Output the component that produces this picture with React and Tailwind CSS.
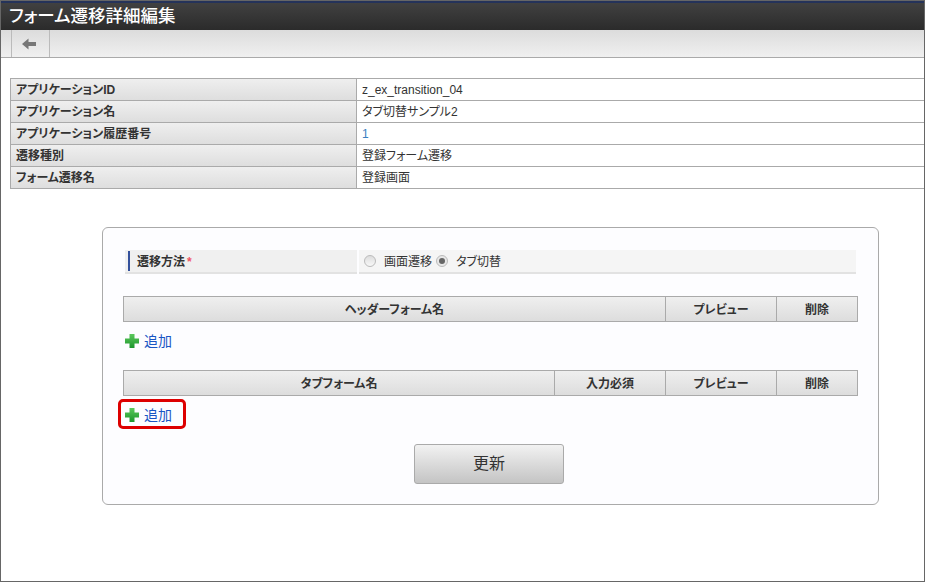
const font = { fontFamily: '"Liberation Sans", "Noto Sans CJK JP", sans-serif' }

const infoRows = [
  ['アプリケーションID', 'z_ex_transition_04'],
  ['アプリケーション名', 'タブ切替サンプル2'],
  ['アプリケーション履歴番号', '1'],
  ['遷移種別', '登録フォーム遷移'],
  ['フォーム遷移名', '登録画面'],
]

function HeaderCell({ className, children }) {
  return (
    <div className={`flex items-center justify-center border-r border-[#aaaaaa] pt-[1px] last:border-r-0 text-xs font-bold text-[#333333] ${className}`}>
      {children}
    </div>
  )
}

function AddLink({ highlighted, id }) {
  return (
    <div className="relative flex h-[19px] w-fit items-center gap-[5px] pl-[2px] text-sm text-[#1a56c4]">
      <svg width="14" height="14" viewBox="0 0 14 14">
        <defs>
          <linearGradient id={id} x1="0" y1="0" x2="0" y2="1">
            <stop offset="0" stopColor="#5cc85c" />
            <stop offset="1" stopColor="#1c962c" />
          </linearGradient>
        </defs>
        <path d="M4.500 0h5v4.500H14v5H9.500V14h-5V9.500H0v-5h4.500z" fill={`url(#${id})`} />
      </svg>
      <span>追加</span>
      {highlighted && (
        <div className="absolute left-[-5px] top-[-6px] h-[30px] w-[68px] rounded-[5px] border-[3px] border-[#dd0000]" />
      )}
    </div>
  )
}

export default function App() {
  return (
    <div style={font} className="flex h-[582px] w-[925px] flex-col overflow-hidden border border-[#666666] bg-white [font-feature-settings:'palt']">
      <div className="h-[2px] bg-[#25335a]" />
      <div className="flex h-[27px] items-center bg-gradient-to-b from-[#414141] to-[#2b2b2b] pl-[8px] text-[17.5px] font-medium text-white">
        フォーム遷移詳細編集
      </div>

      <div className="flex h-[28px] border-b border-[#aaaaaa] bg-gradient-to-b from-[#dcdcdc] to-[#f0f0f0] pl-[10px]">
        <div className="flex w-[39px] items-center justify-center border-x border-[#bbbbbb] pr-[3px]">
          <svg width="14" height="12" viewBox="0 0 14 12">
            <path d="M6.500 0.500v3.500H14v4H6.500v3.500L0 6z" fill="#777777" />
          </svg>
        </div>
      </div>

      <div className="mt-[20px] ml-[9px] border border-r-0 border-[#aaaaaa]">
        {infoRows.map(([label, value], i) => (
          <div key={label} className={`flex ${i > 0 ? 'h-[22px] border-t border-[#aaaaaa]' : 'h-[21px]'}`}>
            <div className="flex w-[346px] items-center border-r border-[#aaaaaa] bg-gradient-to-b from-[#efefef] to-[#dedede] pl-[5px] text-xs font-bold text-[#333333]">
              {label}
            </div>
            <div className={`flex flex-1 items-center pl-[5px] text-xs ${value === '1' ? 'text-[#3a80c0]' : 'text-[#333333]'}`}>
              {value}
            </div>
          </div>
        ))}
      </div>

      <div className="mt-[38px] ml-[101px] h-[278px] w-[777px] rounded-[6px] border border-[#aaaaaa] bg-[#fdfdff] pt-[22px] pl-[20px]">
        <div className="ml-[2px] flex h-[24px] w-[731px] gap-[2px] text-xs">
          <div className="flex w-[232px] items-center border-b-2 border-[#e2e2e2] bg-[#f0f0f0] pl-[3px] font-bold text-[#333333]">
            <div className="mr-[7px] h-[20px] w-[2px] bg-[#34519c]" />
            <span className="pt-[1px]">遷移方法</span>
            <span className="ml-[2px] pt-[1px] text-[#ee5566]">*</span>
          </div>
          <div className="flex flex-1 items-center border-b-2 border-[#e2e2e2] bg-[#f5f5f5] pl-[5px] text-[#333333]">
            <span className="mr-[8px] h-[12px] w-[12px] rounded-full border border-[#bbbbbb] bg-gradient-to-b from-[#dddddd] to-[#f8f8f8]" />
            <span className="pt-[1px]">画面遷移</span>
            <span className="ml-[4px] mr-[8px] flex h-[12px] w-[12px] items-center justify-center rounded-full border border-[#bbbbbb] bg-[#e8e8e8]">
              <span className="h-[6px] w-[6px] rounded-full bg-[#666666]" />
            </span>
            <span className="pt-[1px]">タブ切替</span>
          </div>
        </div>

        <div className="mt-[22px] flex h-[26px] w-[735px] border border-[#aaaaaa] bg-gradient-to-b from-[#efefef] to-[#dddddd]">
          <HeaderCell className="w-[542px]">ヘッダーフォーム名</HeaderCell>
          <HeaderCell className="w-[111px]">プレビュー</HeaderCell>
          <HeaderCell className="flex-1">削除</HeaderCell>
        </div>
        <div className="mt-[9px]">
          <AddLink id="plus-header" />
        </div>

        <div className="mt-[20px] flex h-[26px] w-[735px] border border-[#aaaaaa] bg-gradient-to-b from-[#efefef] to-[#dddddd]">
          <HeaderCell className="w-[431px]">タブフォーム名</HeaderCell>
          <HeaderCell className="w-[111px]">入力必須</HeaderCell>
          <HeaderCell className="w-[111px]">プレビュー</HeaderCell>
          <HeaderCell className="flex-1">削除</HeaderCell>
        </div>
        <div className="mt-[9px]">
          <AddLink id="plus-tab" highlighted />
        </div>

        <button className="mt-[20px] ml-[291px] flex h-[40px] w-[150px] items-center justify-center rounded-[3px] border border-[#aaaaaa] bg-gradient-to-b from-[#f2f2f2] to-[#c4c4c4] text-base text-[#333333]">
          更新
        </button>
      </div>
    </div>
  )
}
